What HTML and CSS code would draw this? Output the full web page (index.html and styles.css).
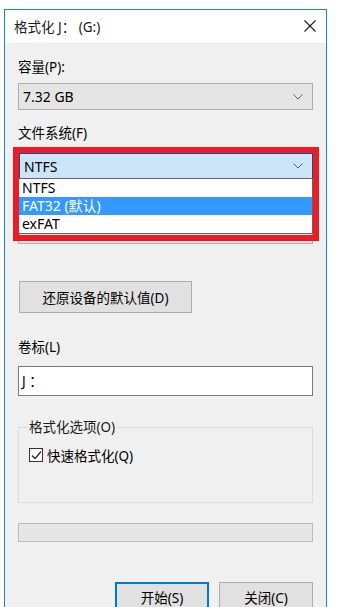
FILE: index.html
```html
<!DOCTYPE html>
<html lang="zh-CN">
<head>
  <meta charset="UTF-8">
  <title>格式化 J：(G:)</title>
  <meta name="viewport" content="width=device-width, initial-scale=1">
  <link rel="stylesheet" href="styles.css">
</head>
<body>
  <div class="window">
    <div class="titlebar">
      <span class="title">格式化 J： (G:)</span>
      <svg class="close" width="12" height="12" viewBox="0 0 12 12">
        <path d="M0.5 0.5 L11.5 11.5 M11.5 0.5 L0.5 11.5" stroke="#1a1a1a" stroke-width="1.1" fill="none"/>
      </svg>
    </div>

    <div class="content">
      <div class="label first">容量(P):</div>
      <div class="combo">
        <span>7.32 GB</span>
        <svg class="arrow" width="10" height="6" viewBox="0 0 10 6"><path d="M0.5 0.5 L5 5 L9.5 0.5" stroke="#606060" fill="none"/></svg>
      </div>

      <div class="label fs-label">文件系统(F)</div>
      <div class="fs-field">
        <div class="combo focused">
          <span>NTFS</span>
          <svg class="arrow" width="10" height="6" viewBox="0 0 10 6"><path d="M0.5 0.5 L5 5 L9.5 0.5" stroke="#606060" fill="none"/></svg>
        </div>
        <div class="combo hidden-combo"></div>

        <ul class="dropdown">
          <li>NTFS</li>
          <li class="selected">FAT32 (默认)</li>
          <li>exFAT</li>
        </ul>
        <div class="highlight"></div>
      </div>

      <button class="btn restore">还原设备的默认值(D)</button>

      <div class="label vol-label">卷标(L)</div>
      <div class="textbox">J ：</div>

      <fieldset class="group">
        <legend>格式化选项(O)</legend>
        <label class="check">
          <span class="box">
            <svg width="11" height="11" viewBox="0 0 11 11"><path d="M1 5.5 L4 8.5 L10 1.5" stroke="#222" stroke-width="1.2" fill="none"/></svg>
          </span>
          快速格式化(Q)
        </label>
      </fieldset>

      <div class="progress"></div>

      <div class="actions">
        <button class="btn default">开始(S)</button>
        <button class="btn">关闭(C)</button>
      </div>
    </div>
  </div>
</body>
</html>
```

FILE: styles.css
```css
body {
  margin: 0;
  background: #fff;
  font-family: "Noto Sans", "Noto Sans CJK SC", sans-serif;
  font-size: 13.5px;
  color: #000;
}
.window {
  margin: 9px 0 0 4px;
  width: 321px;
  border: 1px solid #1883d7;
  border-bottom: none;
  background: #f0f0f0;
}
.titlebar {
  height: 33px;
  background: #fff;
  display: flex;
  align-items: center;
  justify-content: space-between;
  padding: 0 10px 0 9px;
}
.title {
  font-size: 13.5px;
  color: #1a1a1a;
  margin-top: -1px;
}
.close {
  margin-top: -1px;
}
.content {
  padding: 0 13px 10px 13px;
}
.label {
  height: 16px;
  line-height: 16px;
}
.label.first {
  padding-top: 16px;
}
.combo {
  box-sizing: border-box;
  height: 27px;
  margin-top: 8px;
  border: 1px solid #adadad;
  background: #e5e5e5;
  display: flex;
  align-items: center;
  justify-content: space-between;
  padding: 0 9px 0 4px;
  font-size: 14px;
}
.fs-label {
  margin-top: 15px;
}
.fs-field {
  position: relative;
  margin-top: 12px;
}
.fs-field .combo.focused {
  margin: 0 0 0 1px;
  height: 26px;
  background: #cce4f7;
  border-color: #005499;
}
.hidden-combo {
  margin-top: 38px;
}
.dropdown {
  position: absolute;
  left: 0;
  top: 25px;
  width: 295px;
  box-sizing: border-box;
  margin: 0;
  padding: 0;
  list-style: none;
  background: #fff;
  border: 1px solid #646464;
  font-size: 14px;
}
.dropdown li {
  height: 18px;
  line-height: 18px;
  padding-left: 3px;
}
.dropdown li.selected {
  background: #3399ff;
  color: #fff;
}
.highlight {
  position: absolute;
  left: -5px;
  top: -6px;
  width: 306px;
  height: 94px;
  box-sizing: border-box;
  border: 6px solid #ec1c24;
}
.btn {
  box-sizing: border-box;
  font-family: inherit;
  font-size: 13.5px;
  background: #e1e1e1;
  border: 1px solid #adadad;
  color: #000;
  padding: 0;
}
.restore {
  display: block;
  margin: 37px 0 0 1px;
  width: 173px;
  height: 32px;
}
.vol-label {
  margin-top: 26px;
}
.textbox {
  box-sizing: border-box;
  height: 30px;
  margin-top: 11px;
  background: #fff;
  border: 1px solid #7a7a7a;
  line-height: 28px;
  padding-left: 3px;
}
.group {
  box-sizing: border-box;
  height: 83px;
  margin: 24px 0 0 0;
  padding: 0 10px;
  border: 1px solid #dcdcdc;
  position: relative;
}
.group legend {
  padding: 0 2px;
  margin-left: -2px;
  line-height: 14px;
  color: #1a1a1a;
}
.check {
  display: flex;
  align-items: center;
  gap: 4px;
  margin-top: 11px;
}
.box {
  box-sizing: border-box;
  width: 14px;
  height: 14px;
  border: 1px solid #333;
  background: #fff;
  display: flex;
  align-items: center;
  justify-content: center;
}
.progress {
  box-sizing: border-box;
  height: 19px;
  margin-top: 20px;
  background: #e6e6e6;
  border: 1px solid #bcbcbc;
}
.actions {
  display: flex;
  justify-content: flex-end;
  gap: 10px;
  margin-top: 40px;
}
.actions .btn {
  width: 94px;
  height: 30px;
}
.actions .btn.default {
  border: 2px solid #0078d7;
}
```
